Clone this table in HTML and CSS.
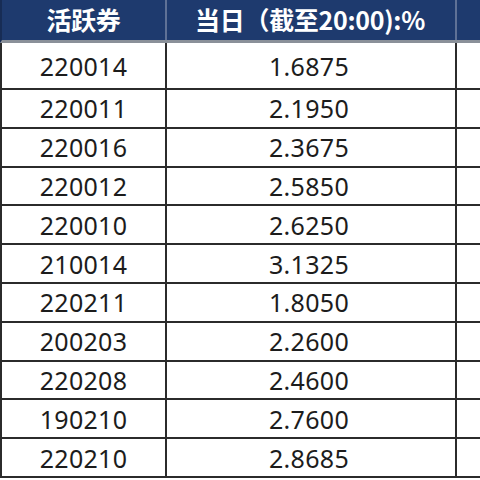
FILE: index.html
```html
<!DOCTYPE html>
<html lang="zh-CN">
<head>
<meta charset="utf-8">
<link rel="stylesheet" href="styles.css">
</head>
<body>
<div class="sheet">
  <div class="row head">
    <div class="cell c1">活跃券</div>
    <div class="cell c2">当日（截至20:00):%</div>
    <div class="cell c3"></div>
  </div>
  <div class="row first"><div class="cell c1">220014</div><div class="cell c2">1.6875</div><div class="cell c3"></div></div>
  <div class="row"><div class="cell c1">220011</div><div class="cell c2">2.1950</div><div class="cell c3"></div></div>
  <div class="row"><div class="cell c1">220016</div><div class="cell c2">2.3675</div><div class="cell c3"></div></div>
  <div class="row"><div class="cell c1">220012</div><div class="cell c2">2.5850</div><div class="cell c3"></div></div>
  <div class="row"><div class="cell c1">220010</div><div class="cell c2">2.6250</div><div class="cell c3"></div></div>
  <div class="row"><div class="cell c1">210014</div><div class="cell c2">3.1325</div><div class="cell c3"></div></div>
  <div class="row"><div class="cell c1">220211</div><div class="cell c2">1.8050</div><div class="cell c3"></div></div>
  <div class="row"><div class="cell c1">200203</div><div class="cell c2">2.2600</div><div class="cell c3"></div></div>
  <div class="row"><div class="cell c1">220208</div><div class="cell c2">2.4600</div><div class="cell c3"></div></div>
  <div class="row"><div class="cell c1">190210</div><div class="cell c2">2.7600</div><div class="cell c3"></div></div>
  <div class="row"><div class="cell c1">220210</div><div class="cell c2">2.8685</div><div class="cell c3"></div></div>
</div>
</body>
</html>
```
FILE: styles.css
```css
html, body {
  margin: 0;
  padding: 0;
  background: #ffffff;
  overflow: hidden;
}
.sheet {
  width: 480px;
  display: flex;
  flex-direction: column;
  font-family: "Noto Sans", "Noto Sans CJK SC", sans-serif;
  color: #1c1c1c;
}
.row {
  display: grid;
  grid-template-columns: 165px 290px 1fr;
  box-sizing: border-box;
  height: 38.8px;
  border-bottom: 2px solid #2b2b2b;
  border-left: 2px solid #2b2b2b;
}
.row.first {
  height: 47px;
}
.row.head {
  height: 43px;
  background: #1e3a6e;
  border-bottom: 3px solid #8a9099;
  border-left: 2px solid #172c55;
}
.cell {
  display: flex;
  align-items: center;
  justify-content: center;
  font-size: 25px;
  letter-spacing: 0.3px;
  box-sizing: border-box;
  white-space: nowrap;
}
.c1, .c2 {
  border-right: 2px solid #2b2b2b;
}
.c2 {
  padding-right: 4px;
}
.head .cell {
  color: #ffffff;
  font-family: "Noto Sans CJK SC", sans-serif;
  font-weight: 700;
  font-size: 25px;
  letter-spacing: -0.3px;
  border-right-color: #5f7196;
  padding-bottom: 2px;
}
.head .c2 {
  padding-left: 0;
  padding-right: 2px;
}
```
